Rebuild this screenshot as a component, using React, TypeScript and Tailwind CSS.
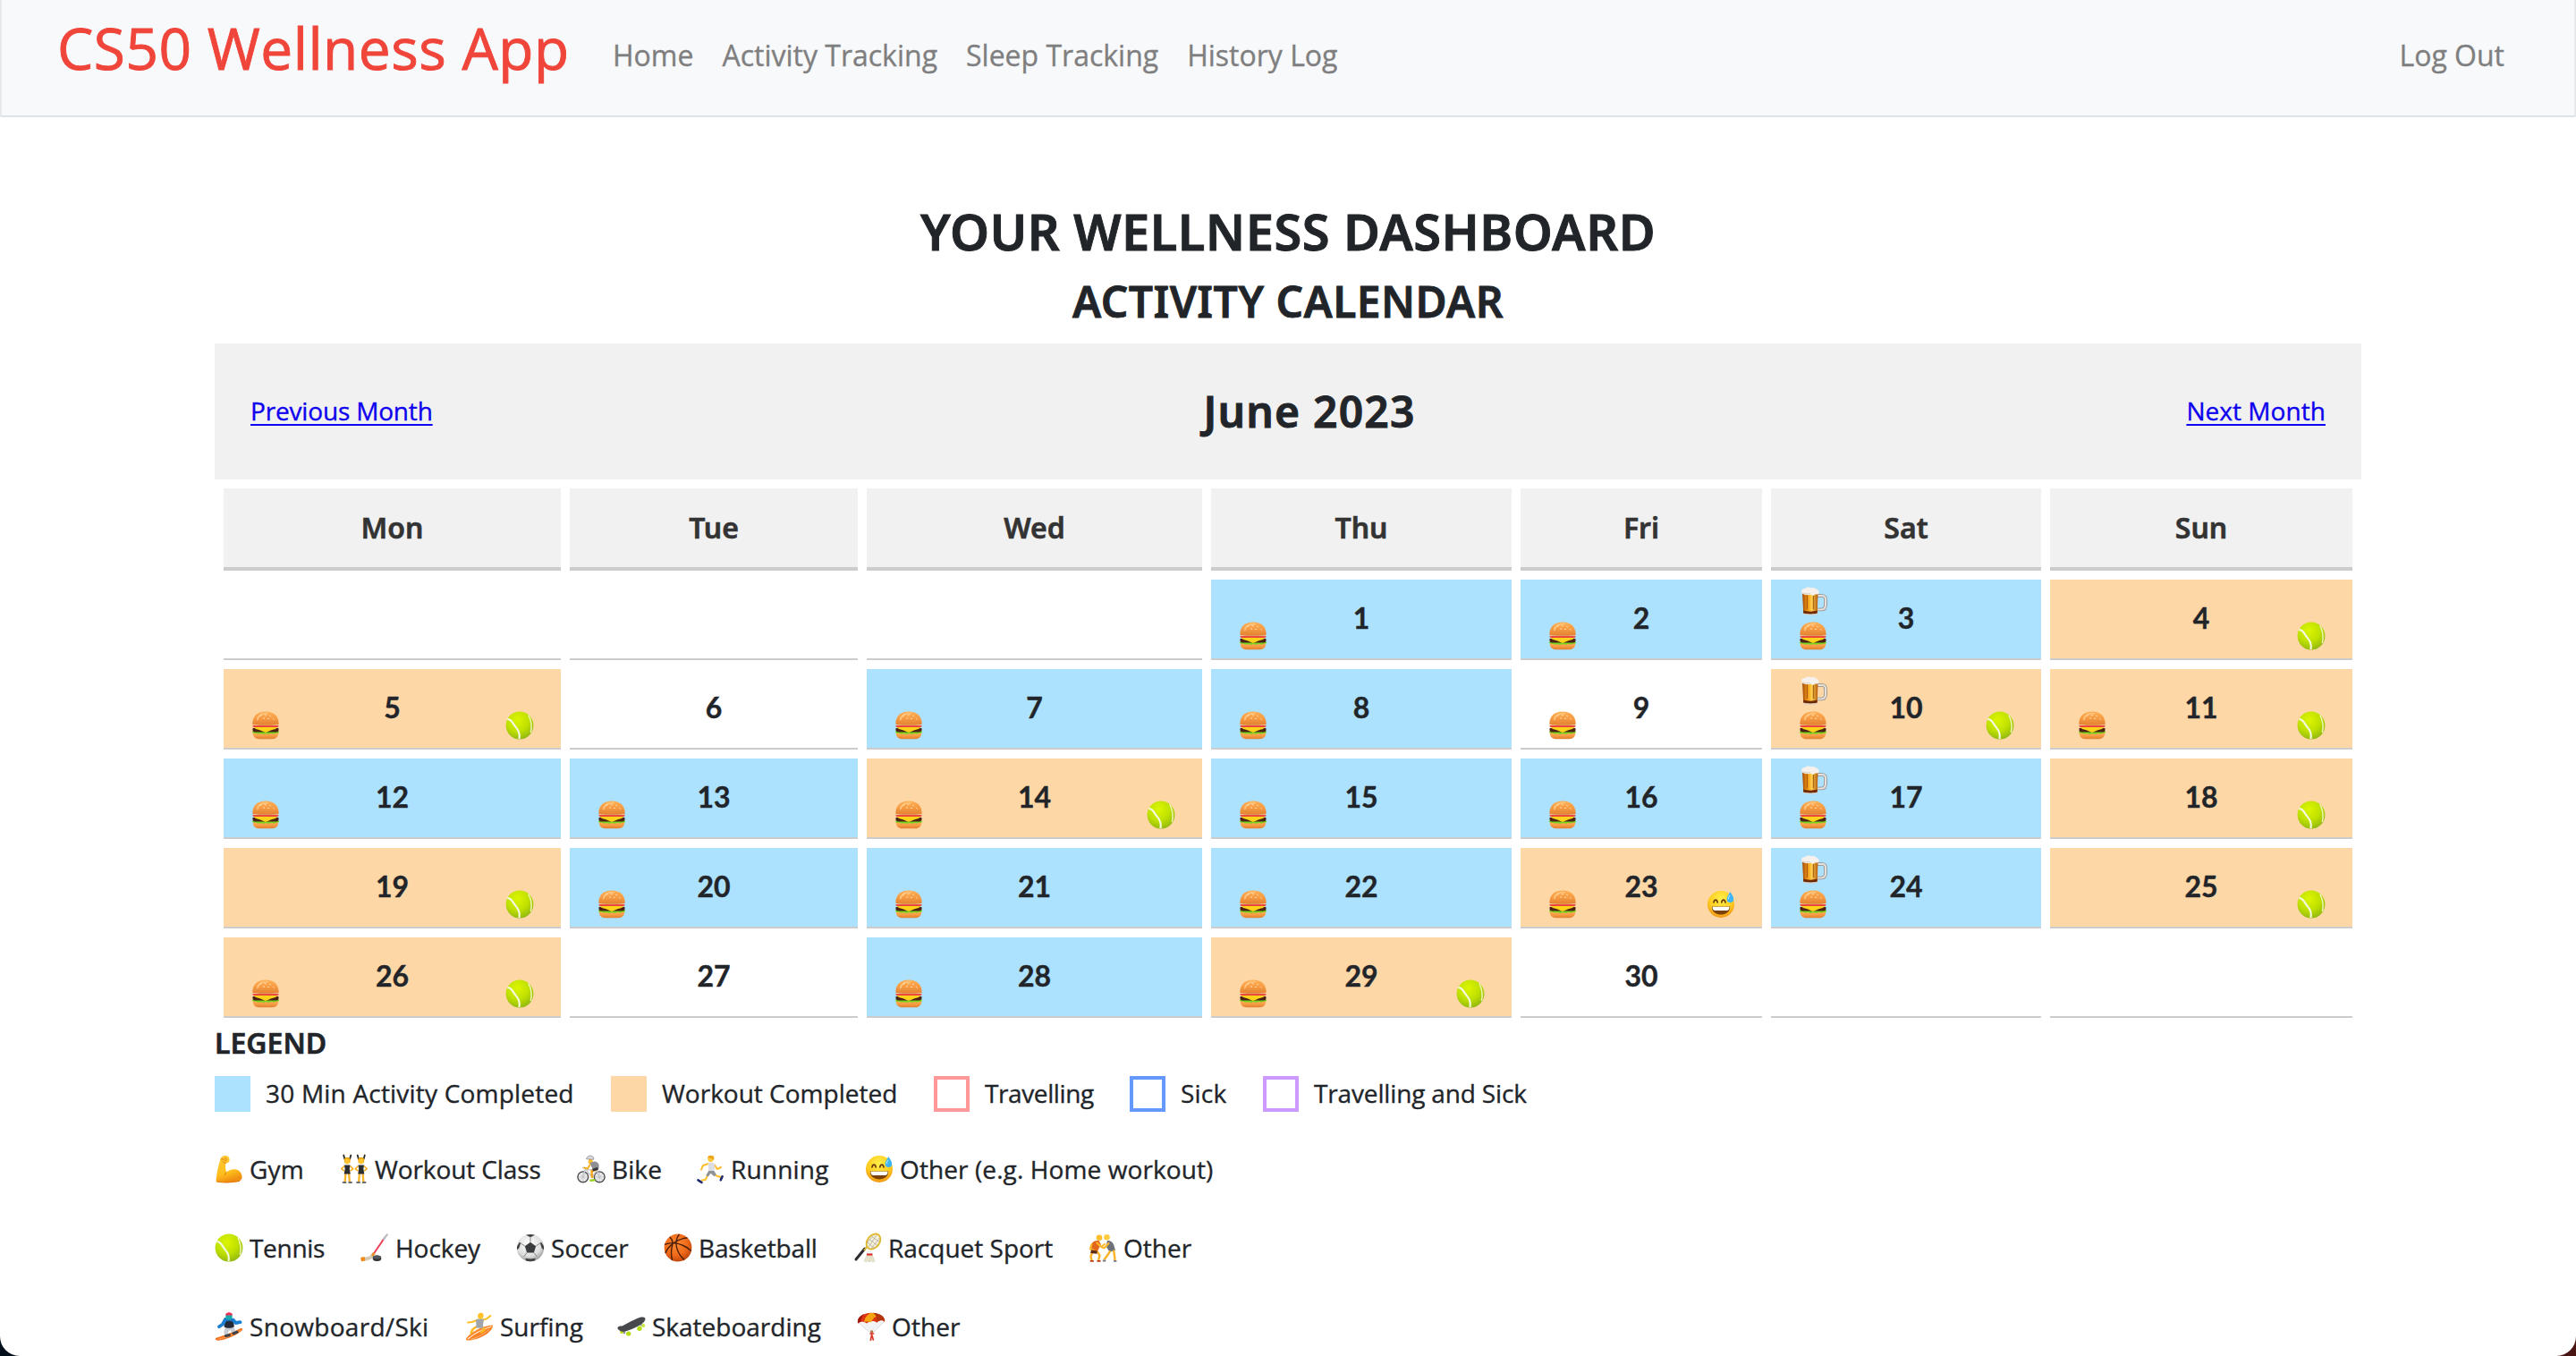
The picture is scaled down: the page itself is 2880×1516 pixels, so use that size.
import React from 'react';

type EmojiName =
  | 'burger' | 'beer' | 'tennis' | 'sweat' | 'muscle' | 'dancers' | 'bike' | 'run'
  | 'hockey' | 'soccer' | 'basketball' | 'badminton' | 'wrestle' | 'snowboard'
  | 'surf' | 'skate' | 'parachute';

/* Gradients shared by every emoji drawing */
function Gradients() {
  return (
    <svg className="absolute h-0 w-0" aria-hidden="true">
      <defs>
        <radialGradient id="g-tennis" cx="0.42" cy="0.3" r="0.75">
          <stop offset="0" stopColor="#dcf500" />
          <stop offset="0.55" stopColor="#bfe000" />
          <stop offset="1" stopColor="#8fb414" />
        </radialGradient>
        <linearGradient id="g-bun" x1="0" y1="0" x2="0" y2="1">
          <stop offset="0" stopColor="#fdb055" />
          <stop offset="0.5" stopColor="#f79b44" />
          <stop offset="1" stopColor="#e0812f" />
        </linearGradient>
        <linearGradient id="g-beer" x1="0" y1="0" x2="1" y2="0">
          <stop offset="0" stopColor="#a34a08" />
          <stop offset="0.35" stopColor="#f39a16" />
          <stop offset="0.6" stopColor="#ffcf4d" />
          <stop offset="1" stopColor="#b35a0c" />
        </linearGradient>
        <radialGradient id="g-face" cx="0.5" cy="0.3" r="0.75">
          <stop offset="0" stopColor="#fff04a" />
          <stop offset="0.6" stopColor="#ffcb1f" />
          <stop offset="1" stopColor="#f08a12" />
        </radialGradient>
        <linearGradient id="g-arm" x1="0" y1="0" x2="0.3" y2="1">
          <stop offset="0" stopColor="#ffc93a" />
          <stop offset="0.7" stopColor="#ffbe1c" />
          <stop offset="1" stopColor="#f08f12" />
        </linearGradient>
        <radialGradient id="g-soccer" cx="0.45" cy="0.35" r="0.7">
          <stop offset="0" stopColor="#ffffff" />
          <stop offset="0.65" stopColor="#dedede" />
          <stop offset="1" stopColor="#8c8c8c" />
        </radialGradient>
        <radialGradient id="g-basket" cx="0.42" cy="0.35" r="0.7">
          <stop offset="0" stopColor="#ff8a32" />
          <stop offset="0.6" stopColor="#ef6a1a" />
          <stop offset="1" stopColor="#b8430c" />
        </radialGradient>
        <linearGradient id="g-surf" x1="0" y1="0" x2="1" y2="1">
          <stop offset="0" stopColor="#ff9b3a" />
          <stop offset="1" stopColor="#f36a10" />
        </linearGradient>
      </defs>
    </svg>
  );
}

const drawings: Record<EmojiName, React.ReactNode> = {
  burger: (
    <>
      <path d="M1.800 24h28.400c.3 4.400-2.500 7.200-7 7.200H8.800c-4.500 0-7.300-2.800-7-7.200z" fill="url(#g-bun)" />
      <path d="M1 22.800c2-1 28-1 30 0 .4 1.600-1.500 2.300-3 1.700-1.800 1.300-3.800 1.300-5.500.2-2 1.300-4.200 1.300-6 .2-2 1.200-4.300 1.200-6.200 0-1.800 1-4 1-5.500-.4-1.900.6-4.200-.2-3.800-1.700z" fill="#76d321" />
      <path d="M1.700 19h28.600c.8 3.200-.5 4.500-2.500 4.500H4.200c-2 0-3.300-1.300-2.500-4.500z" fill="#4a2314" />
      <path d="M2 17.600h28l-3 2.400-4.500 1.200L16 23.900l-6.500-2.700L5 20z" fill="#ffd21a" />
      <path d="M1.600 15.700h28.800v1c0 1-.8 1.400-1.800 1.400H3.400c-1 0-1.800-.4-1.800-1.400z" fill="#e8413a" />
      <path d="M2 15.200h28v.9H2z" fill="#fbd9b8" />
      <path d="M1.300 14.700C1.300 5.500 7 .6 16 .6s14.700 4.900 14.700 14.100c-4 1.500-25.400 1.500-29.400 0z" fill="url(#g-bun)" />
      <path d="M7 8C9 4 13 2.300 18 2.600" stroke="#ffc57c" strokeWidth="1.800" fill="none" strokeLinecap="round" />
      <path d="M10 5.300l1.300-.6M15 4.800h1.300M20.500 5.200l1 .7M6.500 9.800l1-.7M24.500 8.500l.8.800M13.500 8h1.200M18.500 8.500h1" stroke="#ffe8bf" strokeWidth="0.900" strokeLinecap="round" />
    </>
  ),
  beer: (
    <>
      <path d="M20.500 10h5.500c2.600 0 4 1.600 4 4.200v6c0 3.300-2 5.300-5.300 5.300h-4" fill="none" stroke="#8f8a84" strokeWidth="3.600" />
      <path d="M20.500 10h5.500c2.600 0 4 1.600 4 4.200v6c0 3.300-2 5.300-5.300 5.300h-4" fill="none" stroke="#e6e1dc" strokeWidth="2.100" />
      <path d="M4 6.500h17.500l-.7 23c-.2 1.500-15.400 1.500-15.600 0z" fill="url(#g-beer)" />
      <path d="M5.200 26.500c4 1.500 11.700 1.500 15.600 0l-.2 3c-.3 1.900-15 1.900-15.300 0z" fill="#6d2a05" />
      <path d="M5.500 29.500c4 1.200 11.200 1.200 15.200 0v1.200c-2 1.200-13.200 1.200-15.200 0z" fill="#d7d0c8" />
      <path d="M9.500 9v16M16.500 9v16" stroke="#7b3506" strokeWidth="1.100" opacity="0.600" />
      <path d="M3.300 7c-.9-2.800 1-5 3.500-4.900C8.500.2 12 .1 13.800 1.200c3-.9 6 .4 6.500 2 2.200.3 2.800 2.500 2 4.500-1.600 1.500-3 .3-4.500 1-1.200 1.900-2.800 1.400-3.800.1-2.600.6-8.300.7-10.700-1.800z" fill="#f6f1ec" />
      <path d="M4.500 6.700c3 1.500 6 1.300 8.500.9" stroke="#cfc5ba" strokeWidth="0.800" fill="none" />
    </>
  ),
  tennis: (
    <>
      <circle cx="16" cy="16" r="15.400" fill="url(#g-tennis)" />
      <path d="M2.300 9.200c4.700-.3 5.500 4 8.200 7.300 3 3.900 6.200 6.500 5 14.500" fill="none" stroke="#f4f8dc" strokeWidth="2.200" />
      <path d="M25.800 4.500c3 5.500 4.200 12 2.500 19.500" fill="none" stroke="#eef5b8" strokeWidth="1.500" />
    </>
  ),
  sweat: (
    <>
      <circle cx="16" cy="16" r="15" fill="url(#g-face)" />
      <path d="M8 13.800c.6-3.600 3.500-3.600 4.200 0M16.800 13.800c.6-3.600 3.500-3.600 4.200 0" fill="none" stroke="#6c3c08" strokeWidth="1.700" strokeLinecap="round" />
      <path d="M5.800 18.500h20.400c.2 5.500-4.300 9-10.200 9s-10.400-3.500-10.200-9z" fill="#7a4208" />
      <path d="M6.500 18.700h19c0 3-1.200 4.200-2.800 4.200H9.300c-1.600 0-2.800-1.200-2.800-4.200z" fill="#fff" />
      <path d="M26.300 2c2 3 3.900 5.600 3.900 8.200a3.800 3.800 0 0 1-7.600 0C22.600 7.600 24.800 5 26.300 2z" fill="#3fb4f5" />
      <path d="M25.800 6c-.9 1.500-1.700 2.600-1.600 4" stroke="#c7ecff" strokeWidth="1" fill="none" strokeLinecap="round" />
    </>
  ),
  muscle: (
    <>
      <path d="M8 2.300C9.500.8 13 .6 14.800 1.700c1.600 1 2 3.200 1.700 5-.3 1.800-2 2.600-4 2.500-.7 3.600-.6 7 .6 10.300 2.600-2.500 7.500-4.200 11.400-2.900 4 1.300 6.400 5 6 9.200-.3 3-3.200 4-7 4.500-6.500.9-14 1-20.300.3-1.400-.2-1.800-1.200-1.600-2.700C2.500 19.500 4.500 11 6.200 5.500 6.600 4 7 3.200 8 2.300z" fill="url(#g-arm)" />
      <path d="M7.500 5c2.300-.6 3.600.2 5 1.900M11.500 3.300l2 2.400M12.500 9.200c-1.500.1-2.700-.4-3.300-1.500M13.100 19.500c-1 1-1.400 2-1.700 3.200" fill="none" stroke="#d9820d" strokeWidth="1" strokeLinecap="round" />
      <path d="M2.500 30c7 1.200 18 .8 25-.6" stroke="#e27d0c" strokeWidth="1.200" fill="none" strokeLinecap="round" />
    </>
  ),
  dancers: (
    <>
      {[0, 15.500].map((x) => (
        <g key={x} transform={`translate(${x} 0)`}>
          <path d="M5.300 4.500L4.200.5M11.200 4.500L12.300.5" stroke="#2b2b2b" strokeWidth="1.800" strokeLinecap="round" />
          <path d="M4.700 5.600C5 3.600 6.300 3 8.200 3s3.300.6 3.600 2.600l-.5 3.700H5.200z" fill="#eda414" />
          <path d="M8.200 4.500c1.700 0 2.600 1.100 2.600 2.700 0 1.800-1.200 3.300-2.600 3.300S5.600 9 5.600 7.200c0-1.600.9-2.700 2.600-2.700z" fill="#ffc52e" />
          <path d="M5 12.500L1.800 15.800 5 18.200M11.500 12.500l3.200 3.300-3.200 2.400" fill="none" stroke="#f5b021" strokeWidth="1.600" strokeLinejoin="round" />
          <path d="M6.500 20l-.8 10M10 20l.8 10" stroke="#f7b426" strokeWidth="2.300" />
          <path d="M5 11.500h6.500l-.7 4.500 1 5.500H4.700l1-5.500z" fill="#2c2d31" />
          <path d="M3.500 31h3.200M10 31h3.200" stroke="#3d3d40" strokeWidth="1.600" strokeLinecap="round" />
        </g>
      ))}
    </>
  ),
  bike: (
    <>
      <circle cx="6.800" cy="24.800" r="5.900" fill="#eee" stroke="#45464a" strokeWidth="1.400" />
      <circle cx="25.200" cy="24.800" r="5.900" fill="#eee" stroke="#45464a" strokeWidth="1.400" />
      <path d="M6.800 19v11.600M1 24.800h11.600M2.700 20.700l8.200 8.200M10.900 20.700l-8.200 8.200M25.200 19v11.600M19.400 24.800H31M21.100 20.700l8.200 8.200M29.300 20.700l-8.200 8.200" stroke="#a2a4a8" strokeWidth="0.500" />
      <path d="M6.800 24.800l2.700-9 7.500 9.700 5-8.500 3.200 7.800M9.500 17l12.500-.5M6 14.500h4" stroke="#c8c9cc" strokeWidth="1.400" fill="none" />
      <path d="M13 5.500c1.200-1.200 4-1 4.500.5.600 1.900-.5 3.800-2.200 4-1.400.2-2.500-.5-2.700-1.800z" fill="#ffbf2c" />
      <path d="M10.500 4.800C11 1.900 13.700.6 16 1.200c2.200.6 3.200 2.300 2.700 4.100z" fill="#d9dadd" stroke="#707276" strokeWidth="0.600" />
      <path d="M14.500 9.500c3-2.500 6.800-2.700 9-.3 1.600 1.900 1.500 4.700.3 7l-5.300.8-2.500-4z" fill="#8d8f94" />
      <path d="M15 10.500l-3 5-4.500-1" stroke="#f4ae23" strokeWidth="1.900" fill="none" />
      <path d="M22 16.500l-5.500 1.800.5 7.500" stroke="#f0a820" strokeWidth="2.600" fill="none" strokeLinejoin="round" />
      <path d="M23.500 15.500l-6 1.600" stroke="#33353a" strokeWidth="3" />
      <path d="M15.500 28.800l3.800-.6" stroke="#9ad41a" strokeWidth="2.600" strokeLinecap="round" />
    </>
  ),
  run: (
    <>
      <path d="M13.500 3.500C14 1.300 16.200.7 18 1.300c1.900.6 2.400 2.500 1.700 4.500-.6 1.800-2.300 2.600-4 2.200-1.900-.5-2.700-2.300-2.200-4.500z" fill="#ffc83a" />
      <path d="M12.800 3.600C13.400.9 16.600-.1 19 1.200c1.500.9 1.800 2.900 1 4.900-1.200-1.400-2-2-3.300-2.200-1.300-.3-2.500-.5-3.900-.3z" fill="#eba51b" />
      <path d="M14 10L8 12l-2 4.700M21 11.500l2.800 4.500 4.200-2" stroke="#ffbe2e" strokeWidth="2" fill="none" strokeLinecap="round" strokeLinejoin="round" />
      <path d="M13.500 9.500c3-1.700 6.500-1 7.500 1.300.9 3-.5 6-.8 8.700l-6-.5z" fill="#dcdee3" />
      <path d="M14.200 18h6.200l2.700 4.600-2.600 1.700-4-3.500-2.800 4-2.500-1.600z" fill="#8f9297" />
      <path d="M12.700 24l-2 3.800-4.700 1M22 23.300l5 1.400 1.700 2.500" stroke="#ffbe2e" strokeWidth="2" fill="none" />
      <path d="M2.500 28.300l4 2.700M27.800 28.300l1.800-4" stroke="#1d2b6e" strokeWidth="2.600" strokeLinecap="round" />
    </>
  ),
  hockey: (
    <>
      <path d="M27.500 4L12.500 26" stroke="#ee3a52" strokeWidth="1.900" />
      <path d="M30.300.6L25.500 7" stroke="#b9bec6" strokeWidth="2.200" />
      <path d="M15 22.200l-2.600 3.600c-.7 1-1.600 1.500-3 1.800L4 28.800" stroke="#d6c9b4" strokeWidth="3.800" fill="none" />
      <path d="M15.500 21.700l-2.400 3.300" stroke="#ed8a1c" strokeWidth="2.400" />
      <path d="M.6 26.800l4-.9.8 4.600-3.800.8c-1 .2-1.800-4.300-1-4.500z" fill="#f08c1e" />
      <ellipse cx="18.500" cy="27.800" rx="4.800" ry="3.200" fill="#2d2f33" />
      <ellipse cx="18.500" cy="26.600" rx="4.600" ry="2.100" fill="#53565c" />
    </>
  ),
  soccer: (
    <>
      <circle cx="16" cy="16" r="15.200" fill="url(#g-soccer)" />
      <path d="M16 9.700l6.200 4.500-2.300 7.200h-7.800l-2.300-7.200z" fill="#3a3c40" />
      <path d="M11 1.800c3-1.200 7-1.200 10 0l-5 2.400zM1 14.500l2.800-4.700 1.300 1L3.300 16.500 1 18.300zM31 14.500l-2.800-4.700-1.300 1 1.800 5.700 2.300 1.800zM10.500 27.800l5.500.6 5.500-.6-.3 2.400c-3.300 1.400-7.400 1.400-10.400 0z" fill="#404246" />
      <path d="M16 9.700V4.200M22.200 14.200l4.700-3.400M19.900 21.400l3.500 4.600M12.100 21.400l-3.500 4.600M9.800 14.200l-4.700-3.400" stroke="#777a7f" strokeWidth="0.900" />
    </>
  ),
  basketball: (
    <>
      <circle cx="16" cy="16" r="15.400" fill="url(#g-basket)" />
      <path d="M17.500 1C11 9 14 21 23 29.300M1 12.300C10 9 21 11 30.800 19.500M6.800 4c3 2.500 3.800 5.500 2.800 9.500C8 18.500 8 23 9.500 30M2 22C4.500 14.500 15 5.500 26.500 5" fill="none" stroke="#502006" strokeWidth="1.400" />
    </>
  ),
  badminton: (
    <>
      <path d="M12.800 17L3 29" stroke="#2c2d30" strokeWidth="3" strokeLinecap="round" />
      <path d="M16.500 13.500L12 19" stroke="#d6b838" strokeWidth="1.900" />
      <ellipse cx="22.500" cy="9" rx="6.800" ry="9.400" transform="rotate(38 22.500 9)" fill="#f5f0dc" stroke="#dfb930" strokeWidth="1.900" />
      <path d="M16 10l8 7M18 6.500l9 7M21 3.500l8 6M17 15L26 2M20.500 16.500L29.500 5M15 11l7-8.500" stroke="#9c9a8b" strokeWidth="0.600" />
      <path d="M15.700 23.500h5l3.300 7.300-2.500 1-1.600-1.200-1.800 1.200-1.800-1.200-1.600 1.200-2.500-1z" fill="#f1ecd6" stroke="#b8b399" strokeWidth="0.500" />
      <path d="M18.200 24v7M16.700 24l-1.500 6M19.700 24l1.500 6" stroke="#bdb694" strokeWidth="0.500" />
      <path d="M15.200 22.800c0-3.600 6-3.600 6 0z" fill="#fff" stroke="#bbb" strokeWidth="0.400" />
      <path d="M15 22.500h6.400v2H15z" fill="#e0221e" />
    </>
  ),
  wrestle: (
    <>
      <circle cx="12" cy="4.800" r="3.300" fill="#ffbd2b" />
      <circle cx="20.500" cy="4.300" r="3.300" fill="#ffcb3e" />
      <path d="M3 12.500C4.500 8.500 8 7.500 11.500 8l2.300 4-4 8.500-6.300-.5z" fill="#e2661c" />
      <path d="M21 8c4-.3 6.800 2.300 7.500 5.800l1.500 5-6.500 2-4-6.500z" fill="#6e7177" />
      <path d="M9.500 10.500L14 15l4-3M22.500 11l-5 5.500-4-2M3.500 12L1.800 17l4 2" stroke="#ffb829" strokeWidth="2.100" fill="none" strokeLinecap="round" strokeLinejoin="round" />
      <path d="M5 19.500l-2.500 6L3.500 30M9 19.500l3.500 5L11 30M24.500 19.500l-3.500 5-3.500 4.800M28 18.500l1 6 .5 5.500" stroke="#fbb326" strokeWidth="2.400" fill="none" strokeLinejoin="round" />
      <path d="M3 18.300l7 1.500-.8 3-7-.8z" fill="#5d2b16" />
      <path d="M1.800 30.800h4M9.500 30.800h4" stroke="#bf3712" strokeWidth="1.800" />
      <path d="M15.800 30.500h3.500M28 30.800h3.400" stroke="#777b82" strokeWidth="1.800" />
    </>
  ),
  snowboard: (
    <>
      <path d="M1.500 28.800C9 26.500 20 22.500 28.500 18.300c2.500-1 3.300.8 1.800 2.500C24 26.500 12 31 4.500 31.700c-3.500.2-4.500-2-3-2.900z" fill="#f4731f" />
      <path d="M4 30.200c8-1.500 18-5 25.500-10.200" stroke="#ffb06a" strokeWidth="0.800" fill="none" />
      <path d="M12.500 15.500l8.500.5 3.300 6.500-3 2-4.300-4.500-2 2.500.5 5-3.700.7-1.600-6.500z" fill="#c9ccd2" />
      <path d="M12.500 26.500l3.700-.8M21 23.700l4-1.400" stroke="#404248" strokeWidth="3.200" strokeLinecap="round" />
      <path d="M11.500 8c3.500-2 7.500-1.700 9.500.8l.8 7.500c-3.300 2-8 2-11.300.3z" fill="#252a38" />
      <path d="M12 8L9 13.500l-4 2.700M20.500 8.500l3 3.500 5-.8" stroke="#1c7fd0" strokeWidth="3.800" fill="none" strokeLinecap="round" strokeLinejoin="round" />
      <path d="M12 8c2.500-2 5.500-2 8.500.3l-2 2.300c-1.500-1-3-1-4.500 0z" fill="#1a74c2" />
      <circle cx="16" cy="5" r="3.700" fill="#19a9ad" />
      <path d="M12 3.500c.2-4.300 8-4.300 8 0z" fill="#ed3159" />
    </>
  ),
  surf: (
    <>
      <path d="M1 30C5 22.500 20 14.800 31 14.500c.6 6.500-12.500 15.500-26 17-2.600.2-4.500-.3-4-1.500z" fill="url(#g-surf)" />
      <path d="M3 30C10 24 20 19 29.500 16" stroke="#ffe6cf" strokeWidth="1.200" fill="none" />
      <path d="M6 30.500c8-2 16-6.500 21-11.500" stroke="#ffd0a5" strokeWidth="0.700" fill="none" />
      <path d="M12.500 16.500l-4 2.500-1.800 4.300M19 16.500l2.500 3.200-3.500 2.800" stroke="#ffb91f" strokeWidth="2.600" fill="none" strokeLinecap="round" strokeLinejoin="round" />
      <path d="M13.500 9L7.500 11l-4.300.5M20 8.500l4-1 4.200-3.300" stroke="#ffbf26" strokeWidth="2.200" fill="none" strokeLinecap="round" strokeLinejoin="round" />
      <path d="M12 8.500c3-1.500 6.500-1.500 9-.5l-1 6.500.5 3.500-8.500-.5.5-3z" fill="#a2a5aa" />
      <path d="M14.500 2.500C15.500.3 19 .2 20.200 2c1 1.700.3 4.700-1.700 5.500-2 .7-4.600-.5-4.500-3z" fill="#ffc328" />
    </>
  ),
  skate: (
    <>
      <path d="M5 21.500l4 2M25 13l4 2.500" stroke="#8b8d90" strokeWidth="2" />
      <circle cx="5" cy="22" r="2" fill="#b8dc1a" />
      <circle cx="12.700" cy="24" r="2.600" fill="#b4dc12" />
      <circle cx="25" cy="18.300" r="2.700" fill="#b4dc12" />
      <circle cx="29.300" cy="15" r="1.900" fill="#c9e83a" />
      <path d="M.6 17c1-1.500 3-1.700 5-1.600C12 12 18 9 23.500 6.500c2-1 6-1.700 7.600-.1 1.300 2.200-1.600 5.300-4.600 7.300-5.500 3.600-12.500 6.100-18 8.100-3 .9-9-2.300-7.900-4.800z" fill="#46484c" />
    </>
  ),
  parachute: (
    <>
      <path d="M2 12L16 24M11 12l5.500 12M21 13l-4.500 11M30.500 10.500L17 24" stroke="#b9bcc2" strokeWidth="0.600" fill="none" />
      <path d="M3 12L16 23.500 30 10.500l-8-1.800L11 11z" fill="#eef0f3" opacity="0.800" />
      <path d="M1 12.500C-.2 6 7 .8 16 .8S32.300 5 31.200 11.300c-2.300-2.600-6-2.700-8.700.4-3-2.600-8-2.500-11.500.9-3-2.600-7.500-2.600-10-.1z" fill="#dd3413" />
      <path d="M8 11C9 6 12 2 16 .8c4 .4 7 2.500 8.500 4-3-.4-6 .7-8.500 6.500-3-.9-5.500-.9-8-.3z" fill="#f6a312" />
      <path d="M1 11c-.5-3.500 2.500-7.300 7-9C5.500 5 4.500 8 4.500 11c-1.300.2-2.500.7-3.500 1.500z" fill="#a31a0c" />
      <path d="M22.500 11c.3-4.500-1.500-8.500-4.500-10.200 8 .6 13 4 13.200 8.700-2.500-1-6-.8-8.700 1.500z" fill="#b3360c" />
      <path d="M16.500 21.300v5.500M15 24h3.600M16.500 26l-1.200 5.200M17 26l1.300 5" stroke="#dd3b2a" strokeWidth="1.700" strokeLinecap="round" />
      <circle cx="16.700" cy="21.800" r="1.500" fill="#b3714a" />
    </>
  ),
};

function Emoji({ name }: { name: EmojiName }) {
  return (
    <svg viewBox="0 0 32 32" className="block h-8 w-8 shrink-0 overflow-visible">
      {drawings[name]}
    </svg>
  );
}

type Day = { n?: number; kind?: 'blue' | 'orange'; left?: EmojiName[]; right?: EmojiName };

const B: EmojiName[] = ['burger'];
const BB: EmojiName[] = ['beer', 'burger'];

const days: Day[] = [
  {}, {}, {},
  { n: 1, kind: 'blue', left: B },
  { n: 2, kind: 'blue', left: B },
  { n: 3, kind: 'blue', left: BB },
  { n: 4, kind: 'orange', right: 'tennis' },
  { n: 5, kind: 'orange', left: B, right: 'tennis' },
  { n: 6 },
  { n: 7, kind: 'blue', left: B },
  { n: 8, kind: 'blue', left: B },
  { n: 9, left: B },
  { n: 10, kind: 'orange', left: BB, right: 'tennis' },
  { n: 11, kind: 'orange', left: B, right: 'tennis' },
  { n: 12, kind: 'blue', left: B },
  { n: 13, kind: 'blue', left: B },
  { n: 14, kind: 'orange', left: B, right: 'tennis' },
  { n: 15, kind: 'blue', left: B },
  { n: 16, kind: 'blue', left: B },
  { n: 17, kind: 'blue', left: BB },
  { n: 18, kind: 'orange', right: 'tennis' },
  { n: 19, kind: 'orange', right: 'tennis' },
  { n: 20, kind: 'blue', left: B },
  { n: 21, kind: 'blue', left: B },
  { n: 22, kind: 'blue', left: B },
  { n: 23, kind: 'orange', left: B, right: 'sweat' },
  { n: 24, kind: 'blue', left: BB },
  { n: 25, kind: 'orange', right: 'tennis' },
  { n: 26, kind: 'orange', left: B, right: 'tennis' },
  { n: 27 },
  { n: 28, kind: 'blue', left: B },
  { n: 29, kind: 'orange', left: B, right: 'tennis' },
  { n: 30 },
  {}, {},
];

const fills = { blue: 'bg-[#ade2ff]', orange: 'bg-[#fed7a7]' };

function DayCell({ day }: { day: Day }) {
  return (
    <div
      className={`flex h-[90px] items-stretch justify-between border-b-2 border-[#cccccc] pr-[30px] pl-[31px] ${day.kind ? fills[day.kind] : ''}`}
    >
      <div className="flex w-8 flex-col justify-end gap-[7px] pb-[9px]">
        {day.left?.map((e) => <Emoji key={e} name={e} />)}
      </div>
      <div className="flex items-center pr-px pb-[2px] font-['Lato',sans-serif] text-[32px] leading-none font-bold text-[#212529] [-webkit-text-stroke:0.4px]">
        {day.n}
      </div>
      <div className="flex w-8 flex-col justify-end pb-[9px]">
        {day.right && <Emoji name={day.right} />}
      </div>
    </div>
  );
}

const swatches = [
  { label: '30 Min Activity Completed', width: 'w-[443px]', box: 'bg-[#ade2ff]', track: 'tracking-[0.2px]' },
  { label: 'Workout Completed', width: 'w-[361px]', box: 'bg-[#fed7a7]', track: 'tracking-[0px]' },
  { label: 'Travelling', width: 'w-[219px]', box: 'border-4 border-[#ff9999]', track: 'tracking-[-0.4px]' },
  { label: 'Sick', width: 'w-[149px]', box: 'border-4 border-[#6699ff]', track: 'tracking-[0.2px]' },
  { label: 'Travelling and Sick', width: 'w-[320px]', box: 'border-4 border-[#cc99ff]', track: 'tracking-[-0.15px]' },
];

const sports: { icon: EmojiName; label: string; width: string; track: string }[][] = [
  [
    { icon: 'muscle', label: 'Gym', width: 'w-[140px]', track: 'tracking-[0.2px]' },
    { icon: 'dancers', label: 'Workout Class', width: 'w-[265px]', track: 'tracking-[-0.1px]' },
    { icon: 'bike', label: 'Bike', width: 'w-[133px]', track: 'tracking-[0.1px]' },
    { icon: 'run', label: 'Running', width: 'w-[189px]', track: 'tracking-[0.2px]' },
    { icon: 'sweat', label: 'Other (e.g. Home workout)', width: 'w-[420px]', track: 'tracking-[0.1px]' },
  ],
  [
    { icon: 'tennis', label: 'Tennis', width: 'w-[163px]', track: 'tracking-[-0.3px]' },
    { icon: 'hockey', label: 'Hockey', width: 'w-[174px]', track: 'tracking-[-0.05px]' },
    { icon: 'soccer', label: 'Soccer', width: 'w-[165px]', track: 'tracking-[0.1px]' },
    { icon: 'basketball', label: 'Basketball', width: 'w-[212px]', track: 'tracking-[-0.15px]' },
    { icon: 'badminton', label: 'Racquet Sport', width: 'w-[263px]', track: 'tracking-[0px]' },
    { icon: 'wrestle', label: 'Other', width: 'w-[140px]', track: 'tracking-[0px]' },
  ],
  [
    { icon: 'snowboard', label: 'Snowboard/Ski', width: 'w-[280px]', track: 'tracking-[0.3px]' },
    { icon: 'surf', label: 'Surfing', width: 'w-[170px]', track: 'tracking-normal' },
    { icon: 'skate', label: 'Skateboarding', width: 'w-[268px]', track: 'tracking-[0px]' },
    { icon: 'parachute', label: 'Other', width: 'w-[140px]', track: 'tracking-[0.1px]' },
  ],
];

const columns = 'grid grid-cols-[377px_322px_375px_336px_270px_302px_338px] gap-[10px]';

export default function App() {
  return (
    <div className="h-[1516px] w-[2880px] overflow-hidden bg-linear-to-r from-[#03101c] to-[#4a1512]">
      <Gradients />
      <div className="flex h-full flex-col rounded-b-[22px] bg-white font-['Open_Sans','Noto_Sans',sans-serif] text-[#212529] [-webkit-text-stroke:0.35px]">
        <nav className="flex h-[131px] shrink-0 items-start border-x-2 border-b-2 border-x-[#e8e9ec] border-b-[#dee2e6] bg-[#f8f9fb] pr-[78px] pl-[62px] text-[32px] leading-[48px] text-[#7f7f7f]">
          <a className="mt-[14px] w-[621px] text-[64px] leading-[80px] tracking-[0.5px] whitespace-nowrap text-[#f0453a] [-webkit-text-stroke:0.9px]">
            CS50 Wellness App
          </a>
          <div className="mt-[38px] flex gap-8 tracking-[0px]">
            <a>Home</a>
            <a>Activity Tracking</a>
            <a>Sleep Tracking</a>
            <a>History Log</a>
          </div>
          <a className="mt-[38px] ml-auto">Log Out</a>
        </nav>

        <main className="mx-auto w-[2400px]">
          <h1 className="mt-[93px] text-center font-['Noto_Sans',sans-serif] text-[56px] leading-[68px] font-semibold tracking-[0.45px] [-webkit-text-stroke:0.9px]">
            YOUR WELLNESS DASHBOARD
          </h1>
          <h2 className="mt-4 text-center font-['Noto_Sans',sans-serif] text-[48px] leading-[58px] font-semibold tracking-[0.4px] [-webkit-text-stroke:0.8px]">
            ACTIVITY CALENDAR
          </h2>

          <div className="mt-[18px] flex h-[152px] items-center justify-between bg-[#f1f1f1] px-10">
            <a className="pb-[2px] text-[28px] leading-[42px] tracking-[-0.17px] text-[#0d00ee] underline decoration-2 underline-offset-4">
              Previous Month
            </a>
            <h2 className="pb-px font-['Noto_Sans',sans-serif] text-[48px] leading-[58px] font-semibold tracking-[1.2px] [-webkit-text-stroke:0.9px]">
              June 2023
            </h2>
            <a className="pb-[2px] text-[28px] leading-[42px] tracking-[0.05px] text-[#0d00ee] underline decoration-2 underline-offset-4">
              Next Month
            </a>
          </div>

          <div className={`mx-[10px] mt-[10px] ${columns}`}>
            {['Mon', 'Tue', 'Wed', 'Thu', 'Fri', 'Sat', 'Sun'].map((d) => (
              <div
                key={d}
                className="flex h-[92px] items-center justify-center border-b-4 border-[#cccccc] bg-[#f1f1f1] pb-px font-['Noto_Sans',sans-serif] text-[32px] leading-[48px] font-semibold text-[#333333] [-webkit-text-stroke:0.6px]"
              >
                {d}
              </div>
            ))}
            {days.map((day, i) => <DayCell key={i} day={day} />)}
          </div>

          <h3 className="mt-[9px] font-['Noto_Sans',sans-serif] text-[32px] leading-[38px] font-semibold [-webkit-text-stroke:0.6px]">
            LEGEND
          </h3>
          <div className="mt-[18px] flex text-[28px] leading-[38px]">
            {swatches.map((s) => (
              <div key={s.label} className={`flex h-10 shrink-0 items-center gap-[17px] ${s.width} ${s.track}`}>
                <span className={`block h-10 w-10 shrink-0 ${s.box}`} />
                <span className="pb-[2px] whitespace-nowrap">{s.label}</span>
              </div>
            ))}
          </div>
          <div className="mt-[44px] flex flex-col gap-12 text-[28px] leading-[40px]">
            {sports.map((row, i) => (
              <div key={i} className="flex h-10">
                {row.map((s) => (
                  <div key={s.icon} className={`flex shrink-0 items-center gap-[7px] ${s.width} ${s.track}`}>
                    <Emoji name={s.icon} />
                    <span className="whitespace-nowrap">{s.label}</span>
                  </div>
                ))}
              </div>
            ))}
          </div>
        </main>
      </div>
    </div>
  );
}
